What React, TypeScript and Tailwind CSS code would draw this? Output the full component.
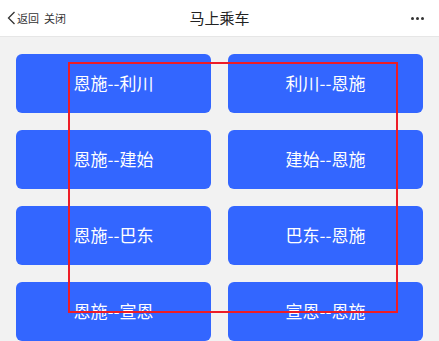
import React from 'react';

const routes = [
  ['恩施--利川', '利川--恩施'],
  ['恩施--建始', '建始--恩施'],
  ['恩施--巴东', '巴东--恩施'],
  ['恩施--宣恩', '宣恩--恩施'],
];

const font = { fontFamily: '"Noto Sans CJK SC", "Noto Sans", sans-serif' };

const App: React.FC = () => {
  return (
    <div className="relative w-[439px] h-[341px] overflow-hidden bg-[#f2f2f2]" style={font}>
      {/* Top bar */}
      <div className="flex items-center h-[37px] bg-white border-b border-[#e6e6e6] px-[7px]">
        <div className="flex items-center w-[120px] text-[11px] text-[#333]">
          <svg width="9" height="14" viewBox="0 0 9 14" fill="none" className="mr-[1px]">
            <polyline points="7.5,1 1.5,7 7.5,13" stroke="#333" strokeWidth="1.3" />
          </svg>
          <span>返回</span>
          <span className="ml-[5px]">关闭</span>
        </div>
        <div className="flex-1 text-center text-[15px] text-[#222]">马上乘车</div>
        <div className="flex w-[120px] justify-end gap-[2px] pr-[8px]">
          <span className="w-[3px] h-[3px] rounded-full bg-[#333]" />
          <span className="w-[3px] h-[3px] rounded-full bg-[#333]" />
          <span className="w-[3px] h-[3px] rounded-full bg-[#333]" />
        </div>
      </div>

      {/* Route buttons */}
      <div className="grid grid-cols-2 gap-x-[17px] gap-y-[17px] px-[16px] pt-[17px]">
        {routes.flat().map((r) => (
          <button
            key={r}
            className="h-[59px] rounded-[6px] bg-[#3366ff] text-white text-[17px] flex items-center justify-center pb-[2px]"
          >
            {r}
          </button>
        ))}
      </div>

      {/* Annotation overlay */}
      <div className="absolute left-[68px] top-[62px] w-[330px] h-[251px] border-[2.5px] border-[#ee1c25] pointer-events-none" />
    </div>
  );
};

export default App;
